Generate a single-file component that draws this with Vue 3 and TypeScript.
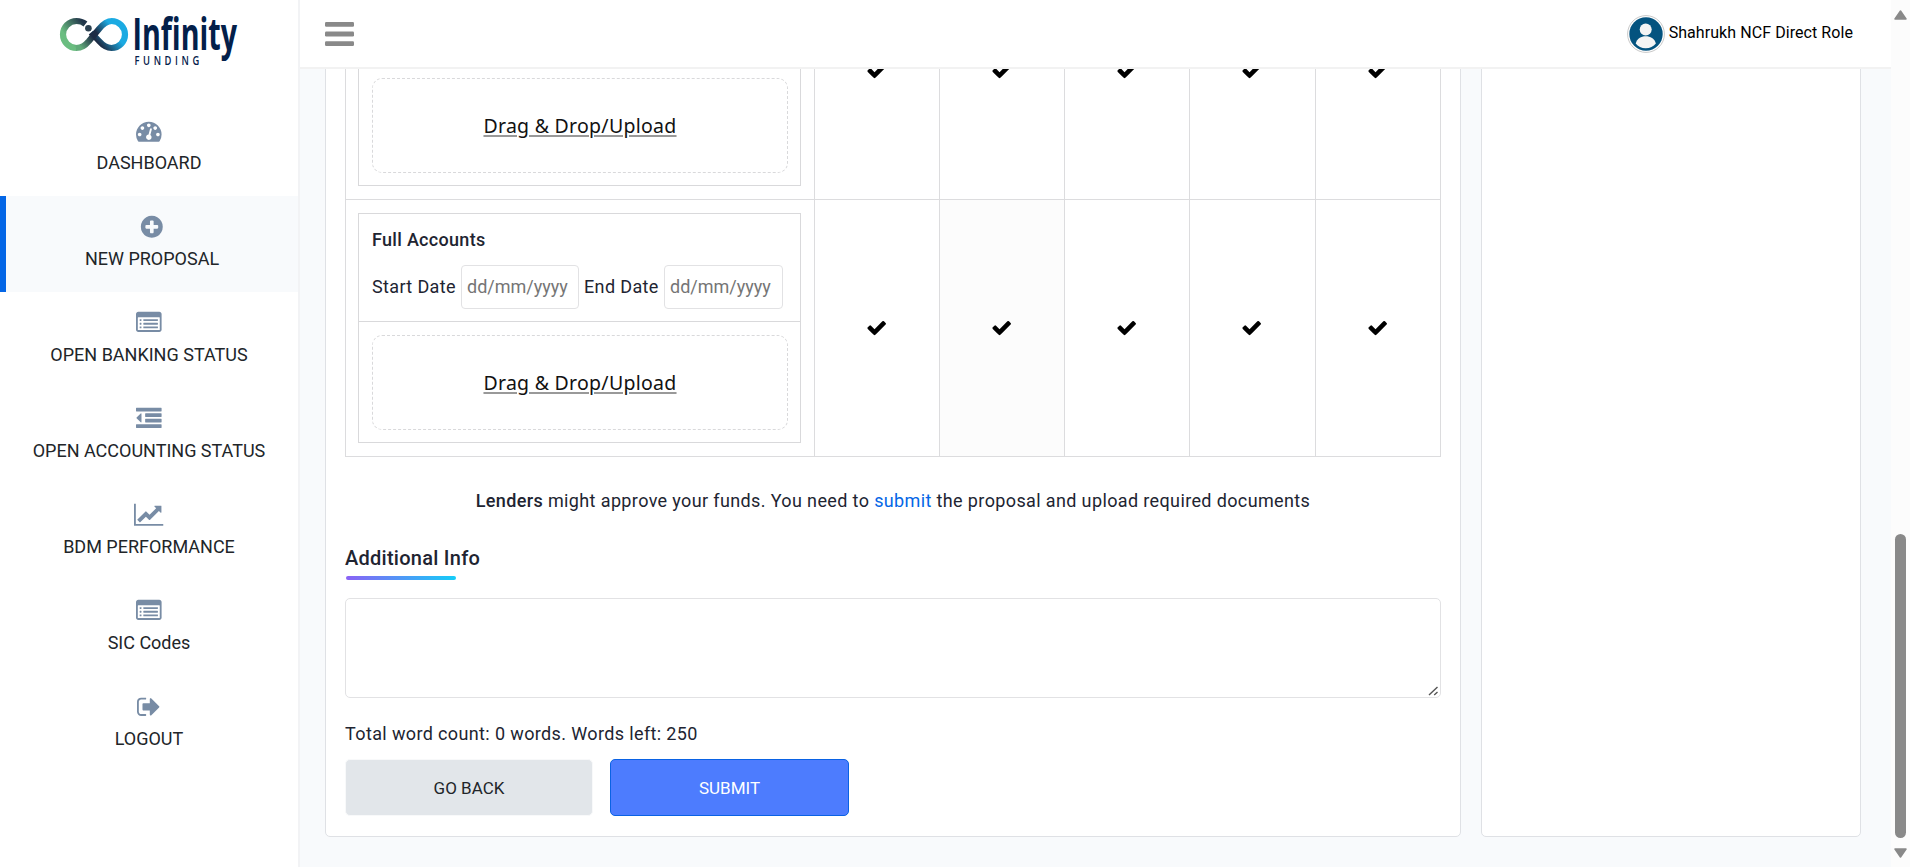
<script setup lang="ts">
interface NavItem {
  label: string
  icon: string
  box: string
  width: number
  active?: boolean
}

interface DocumentRow {
  id: number
  title?: string
  hoveredLender?: number
}

const listIcon =
  'M384 1184v64q0 13-9.500 22.500t-22.500 9.500h-64q-13 0-22.500-9.500t-9.500-22.500v-64q0-13 9.500-22.500t22.500-9.500h64q13 0 22.500 9.500t9.500 22.500zm0-256v64q0 13-9.500 22.500t-22.500 9.500h-64q-13 0-22.500-9.500t-9.500-22.500v-64q0-13 9.500-22.500t22.500-9.500h64q13 0 22.500 9.500t9.500 22.500zm0-256v64q0 13-9.500 22.500t-22.500 9.500h-64q-13 0-22.500-9.500t-9.500-22.500v-64q0-13 9.500-22.500t22.500-9.500h64q13 0 22.500 9.500t9.500 22.500zm1152 512v64q0 13-9.500 22.500t-22.500 9.500h-960q-13 0-22.500-9.500t-9.500-22.500v-64q0-13 9.500-22.500t22.500-9.500h960q13 0 22.500 9.500t9.500 22.500zm0-256v64q0 13-9.500 22.500t-22.500 9.500h-960q-13 0-22.500-9.500t-9.500-22.500v-64q0-13 9.500-22.500t22.500-9.500h960q13 0 22.500 9.500t9.500 22.500zm0-256v64q0 13-9.500 22.500t-22.500 9.500h-960q-13 0-22.500-9.500t-9.500-22.500v-64q0-13 9.500-22.500t22.500-9.500h960q13 0 22.500 9.500t9.500 22.500zm128 704v-832q0-13-9.500-22.500t-22.500-9.500h-1472q-13 0-22.500 9.500t-9.500 22.500v832q0 13 9.500 22.500t22.500 9.500h1472q13 0 22.500-9.500t9.500-22.500zm128-1088v1088q0 66-47 113t-113 47h-1472q-66 0-113-47t-47-113v-1088q0-66 47-113t113-47h1472q66 0 113 47t47 113z'

const gaugeIcon =
  'M384 1152q0-53-37.500-90.500t-90.500-37.500-90.500 37.500-37.500 90.500 37.500 90.500 90.500 37.500 90.500-37.500 37.500-90.500zm192-448q0-53-37.500-90.500t-90.500-37.500-90.500 37.500-37.500 90.500 37.500 90.500 90.500 37.500 90.500-37.500 37.500-90.500zm428 481l101-382q6-26-7.500-48.500t-38.500-29.500-48 6.500-30 39.500l-101 382q-60 5-107 43.500t-63 98.500q-20 77 20 146t117 89 146-20 89-117q16-60-6-117t-72-91zm660-33q0-53-37.500-90.500t-90.500-37.500-90.500 37.500-37.500 90.500 37.500 90.500 90.500 37.500 90.500-37.500 37.500-90.500zm-640-640q0-53-37.500-90.500t-90.500-37.500-90.500 37.500-37.500 90.500 37.500 90.500 90.500 37.500 90.500-37.500 37.500-90.500zm448 192q0-53-37.500-90.500t-90.500-37.500-90.500 37.500-37.500 90.500 37.500 90.500 90.500 37.500 90.500-37.500 37.500-90.500zm320 448q0 261-141 483-19 29-54 29h-1402q-35 0-54-29-141-221-141-483 0-182 71-348t191-286 286-191 348-71 348 71 286 191 191 286 71 348z'

const plusIcon =
  'M1344 960v-128q0-26-19-45t-45-19h-256v-256q0-26-19-45t-45-19h-128q-26 0-45 19t-19 45v256h-256q-26 0-45 19t-19 45v128q0 26 19 45t45 19h256v256q0 26 19 45t45 19h128q26 0 45-19t19-45v-256h256q26 0 45-19t19-45zm320-64q0 209-103 385.500t-279.500 279.500-385.500 103-385.500-103-279.500-279.500-103-385.500 103-385.500 279.500-279.500 385.500-103 385.500 103 279.500 279.500 103 385.500z'

const outdentIcon =
  'M384 544v576q0 13-9.500 22.500t-22.500 9.500q-14 0-23-9l-288-288q-9-9-9-23t9-23l288-288q9-9 23-9 13 0 22.500 9.500t9.500 22.500zm1408 768v192q0 13-9.500 22.500t-22.500 9.500h-1728q-13 0-22.500-9.500t-9.500-22.500v-192q0-13 9.500-22.500t22.500-9.500h1728q13 0 22.500 9.500t9.500 22.500zm0-384v192q0 13-9.500 22.500t-22.500 9.500h-1088q-13 0-22.500-9.500t-9.500-22.500v-192q0-13 9.500-22.500t22.500-9.500h1088q13 0 22.500 9.500t9.500 22.500zm0-384v192q0 13-9.500 22.500t-22.500 9.500h-1088q-13 0-22.500-9.500t-9.500-22.500v-192q0-13 9.500-22.500t22.500-9.500h1088q13 0 22.500 9.500t9.500 22.500zm0-384v192q0 13-9.500 22.500t-22.500 9.500h-1728q-13 0-22.500-9.500t-9.500-22.500v-192q0-13 9.500-22.500t22.500-9.500h1728q13 0 22.500 9.500t9.500 22.500z'

const chartIcon =
  'M2048 1536v128h-2048v-1536h128v1408h1920zm-128-1248v435q0 21-19.500 29.500t-35.500-7.500l-121-121-633 633q-10 10-23 10t-23-10l-233-233-416 416-192-192 585-585q10-10 23-10t23 10l233 233 464-464-121-121q-16-16-7.500-35.500t29.500-19.500h435q14 0 23 9t9 23z'

const logoutIcon =
  'M640 1440q0 4 1 20t.5 26.500-3 23.500-10 19.500-20.500 6.500h-320q-119 0-203.500-84.500t-84.500-203.500v-704q0-119 84.500-203.500t203.500-84.500h320q13 0 22.500 9.500t9.500 22.500q0 4 1 20t.5 26.500-3 23.500-10 19.500-20.500 6.500h-320q-66 0-113 47t-47 113v704q0 66 47 113t113 47h312l11.500 1 11.500 3 8 5.500 7 9 2 13.500zm928-544q0 26-19 45l-544 544q-19 19-45 19t-45-19-19-45v-288h-448q-26 0-45-19t-19-45v-384q0-26 19-45t45-19h448v-288q0-26 19-45t45-19 45 19l544 544q19 19 19 45z'

const checkIcon =
  'M1671 566q0 40-28 68l-724 724-136 136q-28 28-68 28t-68-28l-136-136-362-362q-28-28-28-68t28-68l136-136q28-28 68-28t68 28l294 295 656-657q28-28 68-28t68 28l136 136q28 28 28 68z'

const navItems: NavItem[] = [
  { label: 'DASHBOARD', icon: gaugeIcon, box: '0 0 1792 1792', width: 25.6 },
  { label: 'NEW PROPOSAL', icon: plusIcon, box: '0 0 1792 1792', width: 25.6, active: true },
  { label: 'OPEN BANKING STATUS', icon: listIcon, box: '0 0 1792 1792', width: 25.6 },
  { label: 'OPEN ACCOUNTING STATUS', icon: outdentIcon, box: '0 0 1792 1792', width: 25.6 },
  { label: 'BDM PERFORMANCE', icon: chartIcon, box: '0 0 2048 1792', width: 29.26 },
  { label: 'SIC Codes', icon: listIcon, box: '0 0 1792 1792', width: 25.6 },
  { label: 'LOGOUT', icon: logoutIcon, box: '0 0 1664 1792', width: 23.77 },
]

const documentRows: DocumentRow[] = [{ id: 1 }, { id: 2, title: 'Full Accounts', hoveredLender: 2 }]
</script>

<template>
  <div class="page">
    <aside class="sidebar">
      <svg class="logo" width="298" height="100" viewBox="0 0 298 100">
        <defs>
          <linearGradient id="loopLeft" gradientUnits="userSpaceOnUse" x1="66" y1="44" x2="91" y2="25">
            <stop offset="0.15" stop-color="#6abd80" />
            <stop offset="0.85" stop-color="#22364a" />
          </linearGradient>
          <linearGradient id="loopRight" gradientUnits="userSpaceOnUse" x1="92" y1="44" x2="112" y2="27">
            <stop offset="0.2" stop-color="#1d2c45" />
            <stop offset="0.9" stop-color="#1baae2" />
          </linearGradient>
          <linearGradient id="loopCross" gradientUnits="userSpaceOnUse" x1="78" y1="47" x2="108" y2="22">
            <stop offset="0.05" stop-color="#61ab79" />
            <stop offset="0.45" stop-color="#1d2c45" />
            <stop offset="0.6" stop-color="#1d2c45" />
            <stop offset="1" stop-color="#1baae2" />
          </linearGradient>
        </defs>
        <g fill="none" stroke-width="6.2">
          <path d="M85.500 24C82.500 21.700 79.500 21 76.500 21A13.500 13.500 0 0 0 76.500 48" stroke="url(#loopLeft)" />
          <path d="M111.500 21A13.500 13.500 0 0 1 111.500 48C106 48 103 45.500 99 41L91 32.500" stroke="url(#loopRight)" />
          <path d="M76 48C82 48 85 45.500 89 41L99 29C103 24 106.500 21 112 21" stroke="url(#loopCross)" />
        </g>
        <circle cx="88.400" cy="28.200" r="4.600" fill="#fff" />
        <circle cx="88.400" cy="28.200" r="3.300" fill="#2b4050" />
        <text class="logo-name" x="132.500" y="49.500" textLength="104.500" lengthAdjust="spacingAndGlyphs">Infinity</text>
        <text class="logo-sub" transform="translate(134.500 64.500) scale(0.78 1)" textLength="83" lengthAdjust="spacing">FUNDING</text>
      </svg>
      <nav>
        <a v-for="item in navItems" :key="item.label" class="nav-item" :class="{ active: item.active }">
          <svg class="nav-icon" :viewBox="item.box" :width="item.width" height="25.6">
            <path :d="item.icon" />
          </svg>
          <span>{{ item.label }}</span>
        </a>
      </nav>
    </aside>

    <div class="main">
      <header class="topbar">
        <svg class="burger" width="29" height="24" viewBox="0 0 29 24">
          <rect width="29" height="4.800" rx="1.200" />
          <rect y="9.600" width="29" height="4.800" rx="1.200" />
          <rect y="19.200" width="29" height="4.800" rx="1.200" />
        </svg>
        <div class="user">
          <svg class="avatar" width="38" height="38" viewBox="0 0 38 38">
            <circle cx="19" cy="19" r="18.400" fill="#fff" stroke="#c9c9c9" />
            <circle cx="19" cy="19" r="16.700" fill="#04537f" />
            <circle cx="18.700" cy="14.500" r="6" fill="#f4f4f4" />
            <path d="M8.700 28.500C10 23.500 14 21.200 18.700 21.200S27.500 23.500 28.900 28.500C26.500 31.500 22.900 33.300 18.700 33.300S11 31.500 8.700 28.500z" fill="#f4f4f4" />
          </svg>
          <span>Shahrukh NCF Direct Role</span>
        </div>
      </header>

      <div class="content">
        <section class="card proposal">
          <div class="doc-table">
            <div v-for="row in documentRows" :key="row.id" class="doc-row">
              <div class="doc-cell">
                <div class="doc-box">
                  <div v-if="row.title" class="doc-head">
                    <div class="doc-title">{{ row.title }}</div>
                    <div class="dates">
                      <label>Start Date</label>
                      <input type="text" placeholder="dd/mm/yyyy" />
                      <label class="end-label">End Date</label>
                      <input type="text" class="end-input" placeholder="dd/mm/yyyy" />
                    </div>
                  </div>
                  <div class="doc-drop">
                    <div class="dropzone"><span>Drag &amp; Drop/Upload</span></div>
                  </div>
                </div>
              </div>
              <div
                v-for="lender in 5"
                :key="lender"
                class="check-cell"
                :class="{ hovered: row.hoveredLender === lender }"
              >
                <svg width="21.400" height="21.400" viewBox="0 0 1792 1792"><path :d="checkIcon" /></svg>
              </div>
            </div>
          </div>

          <p class="notice">
            <b>Lenders</b> might approve your funds. You need to <a>submit</a> the proposal and upload required
            documents
          </p>

          <h2>Additional Info</h2>
          <div class="accent"></div>
          <div class="note-field">
            <textarea></textarea>
            <svg class="grip" width="11" height="10" viewBox="0 0 11 10">
              <path d="M1 9L9.500 1M6.200 9L9.500 6" />
            </svg>
          </div>
          <p class="count">Total word count: 0 words. Words left: 250</p>
          <div class="actions">
            <button class="back" type="button">GO BACK</button>
            <button class="submit" type="button">SUBMIT</button>
          </div>
        </section>
        <section class="card side"></section>
      </div>
    </div>

    <div class="scrollbar">
      <svg width="13" height="10" viewBox="0 0 13 10"><path d="M6.500 1L12 9H1z" /></svg>
      <div class="thumb"></div>
      <svg width="13" height="10" viewBox="0 0 13 10"><path d="M6.500 9L12 1H1z" /></svg>
    </div>
  </div>
</template>

<style>
body {
  margin: 0;
  overflow: hidden;
}
</style>

<style scoped>
* {
  box-sizing: border-box;
}
.page {
  display: flex;
  width: 100vw;
  height: 100vh;
  overflow: hidden;
  background: #f8fafc;
  font-family: Roboto, 'Liberation Sans', sans-serif;
  color: #212431;
}
.sidebar {
  flex: none;
  width: 300px;
  background: #fff;
  border-right: 2px solid #f2f3f5;
}
.logo {
  display: block;
}
.logo-name {
  font-family: 'Open Sans', sans-serif;
  font-weight: 700;
  font-size: 45px;
  fill: #03204a;
}
.logo-sub {
  font-family: 'Open Sans', sans-serif;
  font-weight: 600;
  font-size: 12px;
  fill: #03204a;
}
.nav-item {
  display: flex;
  flex-direction: column;
  align-items: center;
  height: 96px;
  padding-top: 18.2px;
  font-size: 18px;
  line-height: 24px;
  color: #212529;
}
.nav-item span {
  margin-top: 7.2px;
}
.nav-item.active {
  background: #f8fafc;
  border-left: 6px solid #0466e6;
}
.nav-icon {
  flex: none;
  fill: #788ca5;
}
.main {
  flex: 1;
  min-width: 0;
  display: flex;
  flex-direction: column;
}
.topbar {
  flex: none;
  height: 69px;
  display: flex;
  align-items: flex-start;
  justify-content: space-between;
  padding: 15px 38px 0 25px;
  background: #fff;
  border-bottom: 2px solid #f2f2f2;
}
.burger {
  margin-top: 7px;
  fill: #898989;
}
.user {
  display: flex;
  gap: 4px;
  font-size: 16px;
  line-height: 35px;
  letter-spacing: 0.07px;
  color: #000;
}
.content {
  flex: 1;
  min-height: 0;
  overflow: hidden;
  display: flex;
  align-items: flex-end;
  gap: 20px;
  padding: 0 30px 30px 25px;
}
.card {
  flex: none;
  height: 900px;
  background: #fff;
  border: 1px solid #dfe1e5;
  border-radius: 5px;
}
.proposal {
  width: 1136px;
  display: flex;
  flex-direction: column;
  justify-content: flex-end;
  padding: 0 19px 20px;
}
.side {
  width: 380px;
}
.doc-table {
  flex: none;
  border-left: 1px solid #dcdcde;
}
.doc-row {
  display: grid;
  grid-template-columns: 469px 125px 125px 125px 126px 125px;
  height: 257px;
  border-bottom: 1px solid #dcdcde;
}
.doc-cell,
.check-cell {
  border-right: 1px solid #dcdcde;
}
.doc-cell {
  padding: 13px 13px 13px 12px;
}
.doc-box {
  height: 230px;
  display: flex;
  flex-direction: column;
  justify-content: flex-end;
  border: 1px solid #d9d9db;
}
.doc-head {
  height: 108px;
  padding: 13px 0 0 13px;
  border-bottom: 1px solid #d9d9db;
}
.doc-title {
  font-size: 18px;
  font-weight: 500;
  line-height: 26px;
  letter-spacing: 0.3px;
}
.dates {
  display: flex;
  align-items: center;
  margin-top: 12px;
  font-size: 18px;
  line-height: 44px;
  letter-spacing: 0.36px;
  white-space: nowrap;
}
.dates label {
  width: 89px;
}
.dates .end-label {
  width: 80px;
  margin-left: 5px;
}
.dates input {
  width: 118px;
  height: 44px;
  padding: 0 5px;
  border: 1px solid #e2e2e4;
  border-radius: 4px;
  font: inherit;
  letter-spacing: 0;
  background: #fff;
}
.dates .end-input {
  width: 119px;
}
.dates input::placeholder {
  color: #757575;
}
.doc-drop {
  padding: 13px 12px 12px 13px;
}
.dropzone {
  height: 95px;
  display: flex;
  align-items: center;
  justify-content: center;
  border: 1px dashed #d9d9db;
  border-radius: 10px;
  font-family: 'Noto Sans', sans-serif;
  font-size: 19.5px;
  letter-spacing: 0.27px;
  color: #111;
}
.dropzone span {
  text-decoration: underline;
  text-decoration-color: #999;
  text-decoration-thickness: 2px;
  text-underline-offset: 2px;
}
.check-cell {
  display: flex;
  align-items: center;
  justify-content: center;
  padding-right: 1px;
}
.check-cell.hovered {
  background: #fcfcfc;
}
.notice {
  margin: 31px 0 0;
  text-align: center;
  font-size: 18px;
  line-height: 26px;
  letter-spacing: 0.37px;
}
.notice b {
  font-weight: 500;
}
.notice a {
  color: #0466e6;
}
h2 {
  margin: 30px 0 0;
  font-size: 20px;
  font-weight: 500;
  line-height: 28px;
  letter-spacing: 0.26px;
}
.accent {
  flex: none;
  width: 110px;
  height: 4px;
  margin: 4px 0 0 1px;
  border-radius: 2px;
  background: linear-gradient(90deg, #8b62f5, #14cdf8);
}
.note-field {
  position: relative;
  flex: none;
  height: 100px;
  margin-top: 18px;
}
textarea {
  display: block;
  width: 1096px;
  height: 100px;
  border: 1px solid #e2e2e4;
  border-radius: 5px;
  background: #fff;
  resize: none;
}
.grip {
  position: absolute;
  right: 2px;
  bottom: 2px;
  fill: none;
  stroke: #555;
  stroke-width: 1.4;
}
.count {
  margin: 23px 0 0;
  font-size: 18px;
  line-height: 26px;
  letter-spacing: 0.37px;
}
.actions {
  display: flex;
  gap: 17px;
  margin-top: 12px;
}
.actions button {
  height: 57px;
  padding: 0;
  border: 1px solid #f8f9fa;
  border-radius: 5px;
  font: 400 17px/24px Roboto, sans-serif;
}
.back {
  width: 248px;
  background: #e2e6ea;
  color: #212529;
}
.actions .submit {
  width: 239px;
  background: #4d7cfe;
  border-color: #0a62e4;
  color: #fff;
}
.scrollbar {
  flex: none;
  width: 19px;
  display: flex;
  flex-direction: column;
  align-items: center;
  justify-content: space-between;
  padding: 10px 0 9px;
  background: #fcfcfc;
  fill: #898989;
}
.scrollbar svg path {
  stroke: #898989;
  stroke-width: 1.5;
  stroke-linejoin: round;
}
.thumb {
  width: 11px;
  height: 304px;
  margin: auto 0 10px;
  border-radius: 6px;
  background: #898989;
}
</style>
